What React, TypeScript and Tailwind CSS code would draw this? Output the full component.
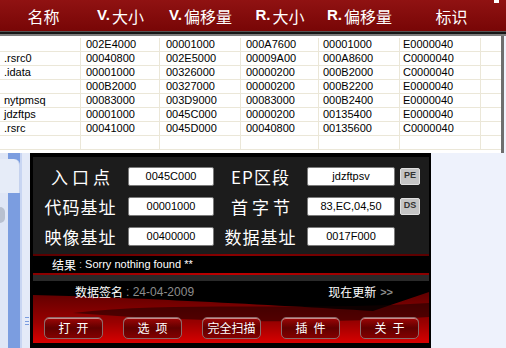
import React from 'react';

const rows = [
  ['', '002E4000', '00001000', '000A7600', '00001000', 'E0000040'],
  ['.rsrc0', '00040800', '002E5000', '00009A00', '000A8600', 'C0000040'],
  ['.idata', '00001000', '00326000', '00000200', '000B2000', 'C0000040'],
  ['', '000B2000', '00327000', '00000200', '000B2200', 'E0000040'],
  ['nytpmsq', '00083000', '003D9000', '00083000', '000B2400', 'E0000040'],
  ['jdzftps', '00001000', '0045C000', '00000200', '00135400', 'E0000040'],
  ['.rsrc', '00041000', '0045D000', '00040800', '00135600', 'C0000040'],
  ['', '', '', '', '', ''],
];

const cjk = { fontFamily: '"Noto Sans CJK SC", "Liberation Sans", sans-serif' };
const latin = { fontFamily: '"Liberation Sans", "Noto Sans CJK SC", sans-serif' };

const cellPad = ['pl-[4px]', 'pl-[5px]', 'pl-[6px]', 'pl-[5px]', 'pl-[4px]', 'pl-[3px]'];

function HeaderLabel({ prefix, text, className = '' }: { prefix?: string; text: string; className?: string }) {
  return (
    <div className={`flex items-center justify-center text-white text-[16px] ${className}`}>
      {prefix && (
        <span className="font-bold text-[15px] mr-[2px]" style={latin}>
          {prefix}
        </span>
      )}
      <span style={cjk}>{text}</span>
    </div>
  );
}

function Field({ value, w }: { value: string; w: string }) {
  return (
    <div
      className={`${w} h-[19px] bg-white border border-[#7a7a7a] rounded-[2px] flex items-center justify-center text-[11px] text-black`}
      style={latin}
    >
      {value}
    </div>
  );
}

function Label({ text, w, wide }: { text: string; w: string; wide?: boolean }) {
  return (
    <div
      className={`${w} text-center text-white text-[17px] leading-none ${wide ? 'tracking-[4px] pl-[4px]' : 'tracking-[1px]'}`}
      style={cjk}
    >
      {text}
    </div>
  );
}

function SmallBtn({ text }: { text: string }) {
  return (
    <div
      className="ml-[5px] w-[20px] h-[17px] bg-[#c4c4c4] border border-[#e0e0e0] rounded-[2px] flex items-center justify-center text-[9px] font-bold text-[#333]"
      style={latin}
    >
      {text}
    </div>
  );
}

function RedBtn({ text, wide }: { text: string; wide?: boolean }) {
  return (
    <div
      className={`w-[59px] h-[22px] rounded-[5px] border border-[#8a6a6a] bg-gradient-to-b from-[#a00808] via-[#600000] to-[#850000] flex items-center justify-center text-white text-[12px] shadow-[inset_0_1px_0_#c88] ${wide ? 'tracking-[6px] pl-[6px]' : ''}`}
      style={cjk}
    >
      {text}
    </div>
  );
}

export default function App() {
  return (
    <div className="w-[506px] h-[348px] overflow-hidden bg-[#eef2fc] relative" style={latin}>
      {/* header */}
      <div className="h-[31px] bg-gradient-to-b from-[#901212] to-[#780606] grid grid-cols-[81px_79px_81px_78px_81px_81px_1fr] relative">
        <HeaderLabel text="名称" className="pl-[6px]" />
        <HeaderLabel prefix="V." text="大小" />
        <HeaderLabel prefix="V." text="偏移量" />
        <HeaderLabel prefix="R." text="大小" />
        <HeaderLabel prefix="R." text="偏移量" />
        <HeaderLabel text="标识" className="pl-[22px]" />
        <div />
        <div className="absolute right-[7px] top-0 w-[5px] h-[3px] bg-white" />
      </div>
      <div className="h-[1px] bg-[#555]" />
      <div className="h-[2px] bg-[#151515]" />
      <div className="h-[2px] bg-[#7c7c7c]" />

      {/* table */}
      <div className="bg-white pt-[2px] pb-[3px] border-r-[3px] border-[#6e6e6e] mr-[2px]">
        {rows.map((r, i) => (
          <div
            key={i}
            className="grid grid-cols-[81px_79px_81px_78px_81px_81px_1fr] h-[14px] border-b border-[#ebe7d8]"
          >
            {r.map((c, j) => (
              <div
                key={j}
                className={`${cellPad[j]} border-r border-[#ebe7d8] text-[11px] leading-[13px] text-black whitespace-nowrap`}
              >
                {c}
              </div>
            ))}
            <div />
          </div>
        ))}
      </div>

      {/* bottom area */}
      <div className="flex h-[195px]">
        {/* left strip */}
        <div className="w-[30px] relative flex">
          <div className="w-[8px] bg-[#dfe6f6]" />
          <div className="w-[12px] bg-[#7b9de0]" />
          <div className="w-[2px] bg-[#c8d5f2]" />
          <div className="w-[8px] bg-[#e4eaf8]" />
          <div className="absolute left-0 top-[6px] w-[20px] h-[34px] bg-[#e6ecf8] rounded-tr-[6px] border-r border-[#c5d2ee]" />
          <div className="absolute left-0 top-[54px] w-[5px] h-[16px] rounded-r-full bg-[#b8c0d0]" />
          <div className="absolute left-[25px] top-[164px] w-[4px] h-[8px] flex flex-col justify-between">
            <div className="h-[1px] bg-[#7b9de0]" />
            <div className="h-[1px] bg-[#7b9de0]" />
            <div className="h-[1px] bg-[#7b9de0]" />
          </div>
        </div>

        {/* panel */}
        <div className="w-[401px] bg-black pt-[4px] pl-[3px] pr-[2px] pb-[5px] flex flex-col">
          <div className="flex-1 flex flex-col bg-[#1c1c1c]">
            <div className="pt-[4px]">
              <div className="h-[30px] flex items-center">
                <Label text="入口点" w="w-[95px]" wide />
                <Field value="0045C000" w="w-[86px]" />
                <Label text="EP区段" w="w-[93px]" />
                <Field value="jdzftpsv" w="w-[88px]" />
                <SmallBtn text="PE" />
              </div>
              <div className="h-[30px] flex items-center">
                <Label text="代码基址" w="w-[95px]" />
                <Field value="00001000" w="w-[86px]" />
                <Label text="首字节" w="w-[93px]" wide />
                <Field value="83,EC,04,50" w="w-[88px]" />
                <SmallBtn text="DS" />
              </div>
              <div className="h-[30px] flex items-center">
                <Label text="映像基址" w="w-[95px]" />
                <Field value="00400000" w="w-[86px]" />
                <Label text="数据基址" w="w-[93px]" />
                <Field value="0017F000" w="w-[88px]" />
              </div>
            </div>
            <div className="h-[3px]" />
            <div className="h-[2px] bg-gradient-to-r from-[#5a0000] via-[#8a0000] to-[#5a0000]" />
            <div className="h-[17px] bg-black flex items-center pl-[19px] text-[11px]">
              <span className="text-white text-[12px]" style={cjk}>结果</span>
              <span className="text-[#aaa] mx-[3px]">:</span>
              <span className="text-white">Sorry nothing found **</span>
            </div>
            <div className="h-[2px] bg-gradient-to-r from-[#8a0000] via-[#c00000] to-[#8a0000]" />
            <div className="h-[6px] bg-[#2a2a2a]" />
            <div className="flex-1 relative bg-black">
              <svg className="absolute inset-0" width="396" height="62" viewBox="0 0 396 62">
                <defs>
                  <linearGradient id="rg" x1="0" y1="0" x2="0" y2="1">
                    <stop offset="0" stopColor="#5e0000" />
                    <stop offset="0.6" stopColor="#9a0000" />
                    <stop offset="1" stopColor="#d80000" />
                  </linearGradient>
                </defs>
                <path d="M0,14 C90,16 240,24 340,30 L396,11 L396,62 L0,62 Z" fill="url(#rg)" />
                <path d="M40,32 C140,20 270,30 396,22 L396,36 C280,44 150,40 40,32 Z" fill="#1a0000" opacity="0.55" />
              </svg>
              <div className="relative h-[22px] flex items-center text-[12px]">
                <div className="pl-[42px] flex items-center">
                  <span className="text-white" style={cjk}>数据签名</span>
                  <span className="text-[#8c8c8c] ml-[3px]">: 24-04-2009</span>
                </div>
                <div className="ml-auto mr-[36px] flex items-center">
                  <span className="text-white" style={cjk}>现在更新</span>
                  <span className="text-[#8c8c8c] ml-[4px] font-bold text-[11px]">&gt;&gt;</span>
                </div>
              </div>
              <div className="relative mt-[14px] flex pl-[11px] gap-[20px]">
                <RedBtn text="打开" wide />
                <RedBtn text="选项" wide />
                <RedBtn text="完全扫描" />
                <RedBtn text="插件" wide />
                <RedBtn text="关于" wide />
              </div>
            </div>
          </div>
        </div>

        <div className="flex-1 bg-[#eef2fc]" />
      </div>
    </div>
  );
}
